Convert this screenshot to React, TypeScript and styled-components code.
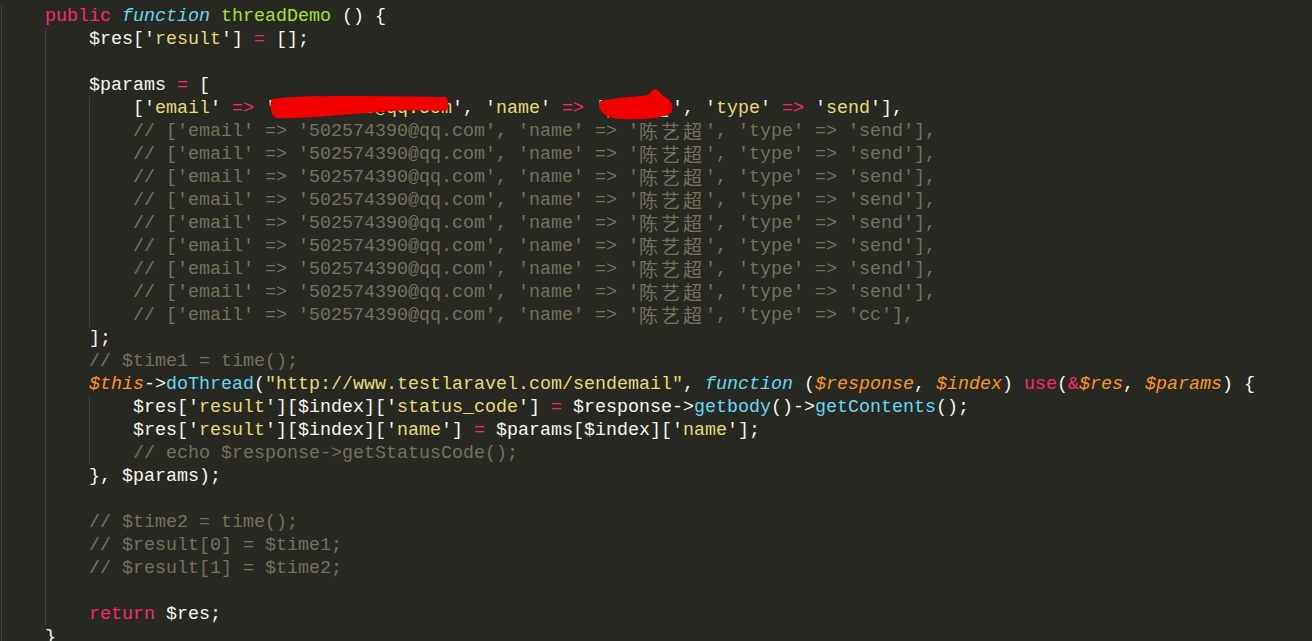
import React from 'react';
import styled, { createGlobalStyle } from 'styled-components';

type Kind = 'p' | 'k' | 's' | 'c' | 'f' | 'fi' | 'g' | 'v';
type Token = [Kind, string];

const palette: Record<Kind, string> = {
  p: '#f8f8f2',
  k: '#f92672',
  s: '#e6db74',
  c: '#75715e',
  f: '#66d9ef',
  fi: '#66d9ef',
  g: '#a6e22e',
  v: '#fd971f',
};

const GlobalStyle = createGlobalStyle`
  html, body {
    margin: 0;
    padding: 0;
    background: #272822;
    overflow: hidden;
  }
`;

const Editor = styled.div`
  position: relative;
  width: 1312px;
  height: 641px;
  overflow: hidden;
  background: #272822;
  padding: 5px 0 0 1px;
  box-sizing: border-box;
  font-family: 'Liberation Mono', 'Noto Sans CJK SC', monospace;
  font-size: 18.33px;
  color: #f8f8f2;
`;

const Line = styled.div`
  height: 23px;
  line-height: 23px;
  white-space: pre;
  overflow: hidden;
`;

const Guide = styled.span`
  display: inline-block;
  vertical-align: top;
  width: 44px;
  height: 23px;
  box-sizing: border-box;
  border-left: 1px solid #3e3f38;
`;

const Tok = styled.span<{ $kind: Kind }>`
  color: ${({ $kind }) => palette[$kind]};
  font-style: ${({ $kind }) => ($kind === 'fi' || $kind === 'v' ? 'italic' : 'normal')};
`;

const Cjk = styled.span`
  display: inline-block;
  vertical-align: top;
  height: 23px;
  line-height: 21px;
  font-family: 'Noto Sans CJK SC', sans-serif;
  font-size: 19px;
  letter-spacing: 3px;
`;

const Scribble = styled.svg`
  position: absolute;
  left: 0;
  top: 0;
  pointer-events: none;
`;

const q = (text: string): Token[] => [
  ['p', "'"],
  ['s', text],
  ['p', "'"],
];

const sendRow = (type: string): Token[] => [
  ['c', `// ['email' => '502574390@qq.com', 'name' => '陈艺超', 'type' => '${type}'],`],
];

const lines: { indent: number; tokens: Token[] }[] = [
  {
    indent: 1,
    tokens: [
      ['k', 'public'],
      ['p', ' '],
      ['fi', 'function'],
      ['p', ' '],
      ['g', 'threadDemo'],
      ['p', ' () {'],
    ],
  },
  { indent: 2, tokens: [['p', '$res['], ...q('result'), ['p', '] '], ['k', '='], ['p', ' [];']] },
  { indent: 2, tokens: [] },
  { indent: 2, tokens: [['p', '$params '], ['k', '='], ['p', ' [']] },
  {
    indent: 3,
    tokens: [
      ['p', '['],
      ...q('email'),
      ['p', ' '],
      ['k', '=>'],
      ['p', ' '],
      ...q('502574390@qq.com'),
      ['p', ', '],
      ...q('name'),
      ['p', ' '],
      ['k', '=>'],
      ['p', ' '],
      ...q('陈艺超'),
      ['p', ', '],
      ...q('type'),
      ['p', ' '],
      ['k', '=>'],
      ['p', ' '],
      ...q('send'),
      ['p', '],'],
    ],
  },
  ...Array.from({ length: 8 }, () => ({ indent: 3, tokens: sendRow('send') })),
  { indent: 3, tokens: sendRow('cc') },
  { indent: 2, tokens: [['p', '];']] },
  { indent: 2, tokens: [['c', '// $time1 = time();']] },
  {
    indent: 2,
    tokens: [
      ['v', '$this'],
      ['p', '->'],
      ['f', 'doThread'],
      ['p', '('],
      ['s', '"http://www.testlaravel.com/sendemail"'],
      ['p', ', '],
      ['fi', 'function'],
      ['p', ' ('],
      ['v', '$response'],
      ['p', ', '],
      ['v', '$index'],
      ['p', ') '],
      ['k', 'use'],
      ['p', '('],
      ['k', '&'],
      ['v', '$res'],
      ['p', ', '],
      ['v', '$params'],
      ['p', ') {'],
    ],
  },
  {
    indent: 3,
    tokens: [
      ['p', '$res['],
      ...q('result'),
      ['p', '][$index]['],
      ...q('status_code'),
      ['p', '] '],
      ['k', '='],
      ['p', ' $response->'],
      ['f', 'getbody'],
      ['p', '()->'],
      ['f', 'getContents'],
      ['p', '();'],
    ],
  },
  {
    indent: 3,
    tokens: [
      ['p', '$res['],
      ...q('result'),
      ['p', '][$index]['],
      ...q('name'),
      ['p', '] '],
      ['k', '='],
      ['p', ' $params[$index]['],
      ...q('name'),
      ['p', '];'],
    ],
  },
  { indent: 3, tokens: [['c', '// echo $response->getStatusCode();']] },
  { indent: 2, tokens: [['p', '}, $params);']] },
  { indent: 2, tokens: [] },
  { indent: 2, tokens: [['c', '// $time2 = time();']] },
  { indent: 2, tokens: [['c', '// $result[0] = $time1;']] },
  { indent: 2, tokens: [['c', '// $result[1] = $time2;']] },
  { indent: 2, tokens: [] },
  { indent: 2, tokens: [['k', 'return'], ['p', ' $res;']] },
  { indent: 1, tokens: [['p', '}']] },
];

function renderText(text: string) {
  return text.split(/([\u4e00-\u9fff]+)/).map((part, i) =>
    /[\u4e00-\u9fff]/.test(part) ? <Cjk key={i}>{part}</Cjk> : part,
  );
}

export default function App(): JSX.Element {
  return (
    <>
      <GlobalStyle />
      <Editor>
        {lines.map((line, i) => (
          <Line key={i}>
            {Array.from({ length: line.indent }, (_, g) => (
              <Guide key={g} />
            ))}
            {line.tokens.map(([kind, text], t) => (
              <Tok key={t} $kind={kind}>
                {renderText(text)}
              </Tok>
            ))}
          </Line>
        ))}
        <Scribble width="1312" height="641" viewBox="0 0 1312 641">
          <path
            d="M272,99 C300,95 360,96 446,97 C449,100 449,108 446,111 C420,110 400,110 380,112 C340,115 300,119 276,118 C270,114 269,104 272,99 Z"
            fill="#f20000"
          />
          <path
            d="M600,101 C618,97 636,97 648,95 C650,92 653,89 656,89 C659,91 661,94 663,96 C669,98 674,104 672,112 C664,119 640,120 620,119 C604,118 597,110 600,101 Z"
            fill="#f20000"
          />
        </Scribble>
      </Editor>
    </>
  );
}
